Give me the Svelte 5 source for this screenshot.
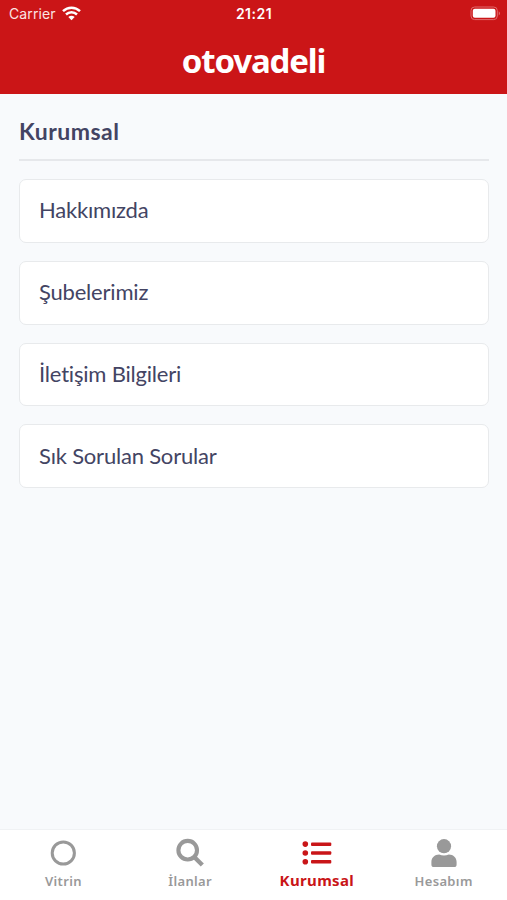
<script>
  const links = ['Hakkımızda', 'Şubelerimiz', 'İletişim Bilgileri', 'Sık Sorulan Sorular'];

  const tabs = [
    { id: 'vitrin', label: 'Vitrin' },
    { id: 'ilanlar', label: 'İlanlar' },
    { id: 'kurumsal', label: 'Kurumsal' },
    { id: 'hesabim', label: 'Hesabım' }
  ];

  let active = $state('kurumsal');
</script>

<div class="screen">
  <header>
    <div class="status-bar">
      <div class="carrier">
        <span>Carrier</span>
        <svg width="19" height="15" viewBox="0 0 19 15" fill="none" stroke="#fff" stroke-width="2.5">
          <path d="M1 5.1C5.8 .5 13.2 .5 18 5.1" />
          <path d="M4 8.5C7.1 5.6 11.9 5.6 15 8.5" />
          <path d="M6.3 11.1Q9.5 8.3 12.7 11.1L9.5 14.2z" fill="#fff" stroke="none" />
        </svg>
      </div>
      <span class="clock">21:21</span>
      <svg class="battery" width="31" height="15" viewBox="0 0 31 15">
        <rect x="1" y="1" width="26.3" height="12.6" rx="3.6" fill="none" stroke="#e06b6d" />
        <rect x="2.8" y="2.8" width="22.7" height="9" rx="2" fill="#fff" />
        <path d="M28.8 5.2Q30.7 7.3 28.8 9.4z" fill="#e58a8c" />
      </svg>
    </div>
    <div class="logo">otovadeli</div>
  </header>

  <main>
    <h1>Kurumsal</h1>
    <ul class="link-list">
      {#each links as link (link)}
        <li><button class="link">{link}</button></li>
      {/each}
    </ul>
  </main>

  <nav>
    {#each tabs as tab (tab.id)}
      <button class="tab" class:active={active === tab.id} onclick={() => (active = tab.id)}>
        <svg width="30" height="30" viewBox="0 0 30 30" fill="currentColor">
          {#if tab.id === 'vitrin'}
            <circle cx="15.3" cy="15" r="11.1" fill="none" stroke="currentColor" stroke-width="3" />
          {:else if tab.id === 'ilanlar'}
            <circle cx="12.7" cy="12.2" r="9.3" fill="none" stroke="currentColor" stroke-width="4.1" />
            <path d="M19.5 19.2L27.3 27" stroke="currentColor" stroke-width="4.4" />
          {:else if tab.id === 'kurumsal'}
            <circle cx="3.3" cy="6.1" r="2.8" />
            <circle cx="3.3" cy="15" r="2.8" />
            <circle cx="3.3" cy="23.8" r="2.8" />
            <rect x="9" y="4.4" width="20.3" height="3.5" rx="1" />
            <rect x="9" y="13.2" width="20.3" height="3.5" rx="1" />
            <rect x="9" y="22" width="20.3" height="3.5" rx="1" />
          {:else}
            <circle cx="15" cy="8.2" r="7.1" />
            <path d="M10.2 16.6c3 1.3 6.6 1.3 9.6 0 4.6 0 7.8 3.2 7.8 7.5v2.3a2.6 2.6 0 0 1-2.6 2.6H5a2.6 2.6 0 0 1-2.6-2.6v-2.3c0-4.3 3.2-7.5 7.8-7.5z" />
          {/if}
        </svg>
        <span>{tab.label}</span>
      </button>
    {/each}
  </nav>
</div>

<style>
  :global(body) {
    margin: 0;
  }

  .screen {
    display: flex;
    flex-direction: column;
    height: 900px;
    background: #f8fafc;
    color: #434463;
    font-family: Lato, sans-serif;
    font-variant-ligatures: none;
  }

  header {
    height: 94px;
    background: #cb1517;
    color: #fff;
  }

  .status-bar {
    display: grid;
    grid-template-columns: 1fr auto 1fr;
    align-items: center;
    height: 27px;
    padding: 0 6px 0 9px;
    font-family: Inter, sans-serif;
    font-size: 14px;
  }

  .carrier {
    display: flex;
    align-items: center;
    gap: 6px;
    color: #fbe3e3;
    letter-spacing: 0.1px;
  }

  .clock {
    margin-right: 2px;
    font-weight: 600;
    font-size: 14px;
    letter-spacing: 0.5px;
  }

  .battery {
    justify-self: end;
  }

  .logo {
    text-align: center;
    font-family: "Noto Sans", sans-serif;
    font-size: 33px;
    font-weight: 700;
    line-height: 67px;
    letter-spacing: -1.15px;
  }

  main {
    flex: 1;
    padding: 18px 18px 0 19px;
  }

  h1 {
    margin: 0 0 18px;
    height: 47px;
    border-bottom: 2px solid #e6e8eb;
    font-size: 23px;
    font-weight: 700;
    line-height: 38px;
    letter-spacing: 0.5px;
  }

  .link-list {
    display: flex;
    flex-direction: column;
    gap: 18px;
    list-style: none;
    margin: 0;
    padding: 0;
  }

  .link {
    display: block;
    box-sizing: border-box;
    width: 100%;
    height: 63.8px;
    padding: 0 18px 2px 19px;
    border: 1.5px solid #e8eaec;
    border-radius: 7px;
    background: #fff;
    color: inherit;
    font: 22px Lato, sans-serif;
    font-variant-ligatures: none;
    letter-spacing: -0.2px;
    text-align: left;
  }

  nav {
    display: grid;
    grid-template-columns: repeat(4, 1fr);
    height: 71px;
    border-top: 1px solid #f0f2f4;
    box-sizing: border-box;
    background: #fff;
  }

  .tab {
    display: flex;
    flex-direction: column;
    align-items: center;
    padding: 8px 0 0;
    border: none;
    background: none;
    color: #999;
    font: 600 13px "Noto Sans", sans-serif;
    letter-spacing: 0.35px;
  }

  .tab span {
    margin-top: 3px;
    line-height: 20px;
  }

  .tab.active {
    color: #c91518;
    font-size: 15px;
    font-weight: 700;
  }

  .tab.active span {
    margin-top: 2px;
  }
</style>
